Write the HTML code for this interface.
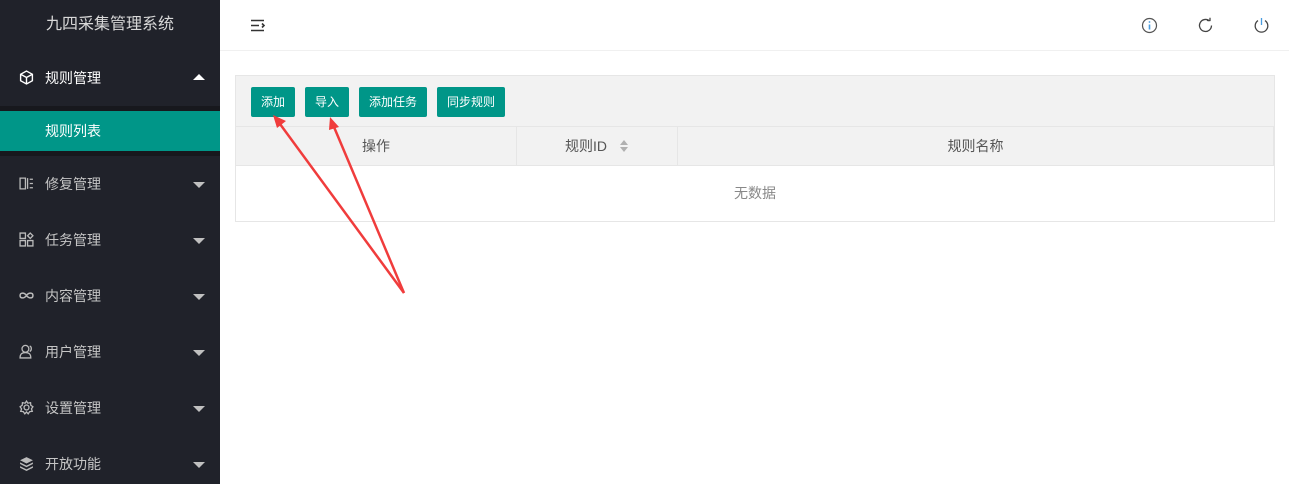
<!DOCTYPE html>
<html><head><meta charset="utf-8"><style>
*{margin:0;padding:0;box-sizing:border-box}
body{width:1289px;height:484px;overflow:hidden;font-family:"Liberation Sans","Noto Sans CJK SC",sans-serif;background:#fff;position:relative}
.side{position:absolute;left:0;top:0;width:220px;height:484px;background:#20222a}
.logo{position:absolute;left:0;top:0;width:220px;height:50px;line-height:50px;text-align:center;color:#d8d8d8;font-size:16px}
.item{position:absolute;left:0;width:220px;height:40px;line-height:40px;color:#c5c5c5;font-size:14px}
.item .t{position:absolute;left:45px}
.item .ic{position:absolute;left:19px;top:12px;width:15px;height:15px}
.item .ar{position:absolute;left:193px;top:18px;width:0;height:0;border-left:6px solid transparent;border-right:6px solid transparent;border-top:6px solid #c0c0c0}
.sub{position:absolute;left:0;top:106px;width:220px;height:50px;background:#17181d}
.act{position:absolute;left:0;top:111px;width:220px;height:40px;background:#009688;color:#fff;font-size:14px;line-height:40px;padding-left:45px}
.hdr{position:absolute;left:220px;top:0;right:0;height:51px;border-bottom:1px solid #f0f0f0}
.panel{position:absolute;left:235px;top:75px;width:1040px;height:147px;border:1px solid #e6e6e6}
.tb{height:51px;background:#f2f2f2;border-bottom:1px solid #e6e6e6;padding:11px 15px;display:flex;gap:10px}
.btn{display:block;height:30px;line-height:30px;padding:0 10px;background:#009688;color:#fff;font-size:12px;border-radius:2px}
.th{height:39px;background:#f2f2f2;border-bottom:1px solid #e6e6e6;display:flex;color:#555;font-size:14px}
.th div{line-height:38px;text-align:center;border-right:1px solid #e6e6e6}
.empty{text-align:center;line-height:55px;color:#888;font-size:14px}
</style></head><body>
<div class="side">
<div class="logo">九四采集管理系统</div>
<div class="item" style="top:58px;color:#fff"><svg class="ic" viewBox="0 0 14 14" fill="none" stroke="#fff" stroke-width="1.3"><path d="M7 1L12.5 4V10L7 13L1.5 10V4Z M1.5 4L7 7L12.5 4 M7 7V13"/></svg><span class="t">规则管理</span><span class="ar" style="border-top:0;border-bottom:6px solid #fff;top:16px"></span></div>
<div class="sub"></div>
<div class="act">规则列表</div>
<div class="item" style="top:164px"><svg class="ic" viewBox="0 0 14 14" fill="none" stroke="#bbb" stroke-width="1.2"><path d="M1 2H6V12H1Z M8 2V12 M10 3H13 M10 7H13 M10 11H13"/></svg><span class="t">修复管理</span><span class="ar"></span></div>
<div class="item" style="top:220px"><svg class="ic" viewBox="0 0 14 14" fill="none" stroke="#bbb" stroke-width="1.2"><path d="M1 1H6V6H1Z M1 8H6V13H1Z M8 8H13V13H8Z M10.5 1L13 3.5L10.5 6L8 3.5Z"/></svg><span class="t">任务管理</span><span class="ar"></span></div>
<div class="item" style="top:276px"><svg class="ic" viewBox="0 0 14 14" fill="none" stroke="#bbb" stroke-width="1.4"><path d="M7 7C5 4 1 4 1 7C1 10 5 10 7 7C9 4 13 4 13 7C13 10 9 10 7 7Z"/></svg><span class="t">内容管理</span><span class="ar"></span></div>
<div class="item" style="top:332px"><svg class="ic" viewBox="0 0 14 14" fill="none" stroke="#bbb" stroke-width="1.2"><circle cx="6" cy="4.5" r="3.2"/><path d="M1 13C1 9 3 8 6 8C9 8 11 9 11 13Z M10 1.8C12 2.5 12 6 10 7"/></svg><span class="t">用户管理</span><span class="ar"></span></div>
<div class="item" style="top:388px"><svg class="ic" viewBox="0 0 14 14" fill="none" stroke="#bbb" stroke-width="1.2"><circle cx="7" cy="7" r="2.3"/><path d="M7 1L8.3 3L10.8 2.5L11 4.9L13 6.3L11.6 8.3L12.4 10.6L10 10.8L8.6 12.9L7 11.2L5.4 12.9L4 10.8L1.6 10.6L2.4 8.3L1 6.3L3 4.9L3.2 2.5L5.7 3Z"/></svg><span class="t">设置管理</span><span class="ar"></span></div>
<div class="item" style="top:444px"><svg class="ic" viewBox="0 0 14 14" fill="#bbb"><path d="M7 1L13 4L7 7L1 4Z M1 6L7 9L13 6V7.5L7 10.5L1 7.5Z M1 9.5L7 12.5L13 9.5V11L7 14L1 11Z"/></svg><span class="t">开放功能</span><span class="ar"></span></div>
</div>
<div class="hdr">
<svg style="position:absolute;left:30px;top:19px" width="16" height="13" viewBox="0 0 16 13" stroke="#333" stroke-width="1.6" fill="none"><path d="M1 1.5H14 M1 6.5H9 M1 11.5H14 M12 4.5L14 6.5L12 8.5"/></svg>
<svg style="position:absolute;left:921px;top:17px" width="17" height="17" viewBox="0 0 17 17" fill="none" stroke="#555" stroke-width="1.2"><circle cx="8.5" cy="8.5" r="7"/><path d="M8.5 7.5V12.5" stroke="#4a9de0" stroke-width="1.6"/><circle cx="8.5" cy="5" r="0.9" fill="#4a9de0" stroke="none"/></svg>
<svg style="position:absolute;left:977px;top:17px" width="17" height="17" viewBox="0 0 17 17" fill="none" stroke="#444" stroke-width="1.3"><path d="M14.5 8.5A6 6 0 1 1 12.5 4"/><path d="M10 3.5H13V0.8"/></svg>
<svg style="position:absolute;left:1033px;top:17px" width="17" height="17" viewBox="0 0 17 17" fill="none" stroke="#444" stroke-width="1.3"><path d="M5 3.6A6.3 6.3 0 1 0 12 3.6"/><path d="M8.5 1V8" stroke="#4a9de0"/></svg>
</div>
<div class="panel">
<div class="tb"><span class="btn">添加</span><span class="btn">导入</span><span class="btn">添加任务</span><span class="btn">同步规则</span></div>
<div class="th"><div style="width:281px">操作</div><div style="width:161px">规则ID <svg width="10" height="14" viewBox="0 0 10 14" style="margin-left:8px;vertical-align:-2px" fill="#b0b0b0"><path d="M5 1L9 6H1Z M5 13L9 8H1Z"/></svg></div><div style="flex:1">规则名称</div></div>
<div class="empty">无数据</div>
</div>
<svg style="position:absolute;left:0;top:0" width="1289" height="484">
<g stroke="#f03c3c" stroke-width="2.5" fill="#f03c3c">
<line x1="404" y1="293" x2="280" y2="124"/><line x1="404" y1="293" x2="334" y2="127"/>
<path d="M273 115L286 121L277 128Z" stroke="none"/><path d="M330 117L339 127L329 130Z" stroke="none"/>
</g></svg>
</body></html>
